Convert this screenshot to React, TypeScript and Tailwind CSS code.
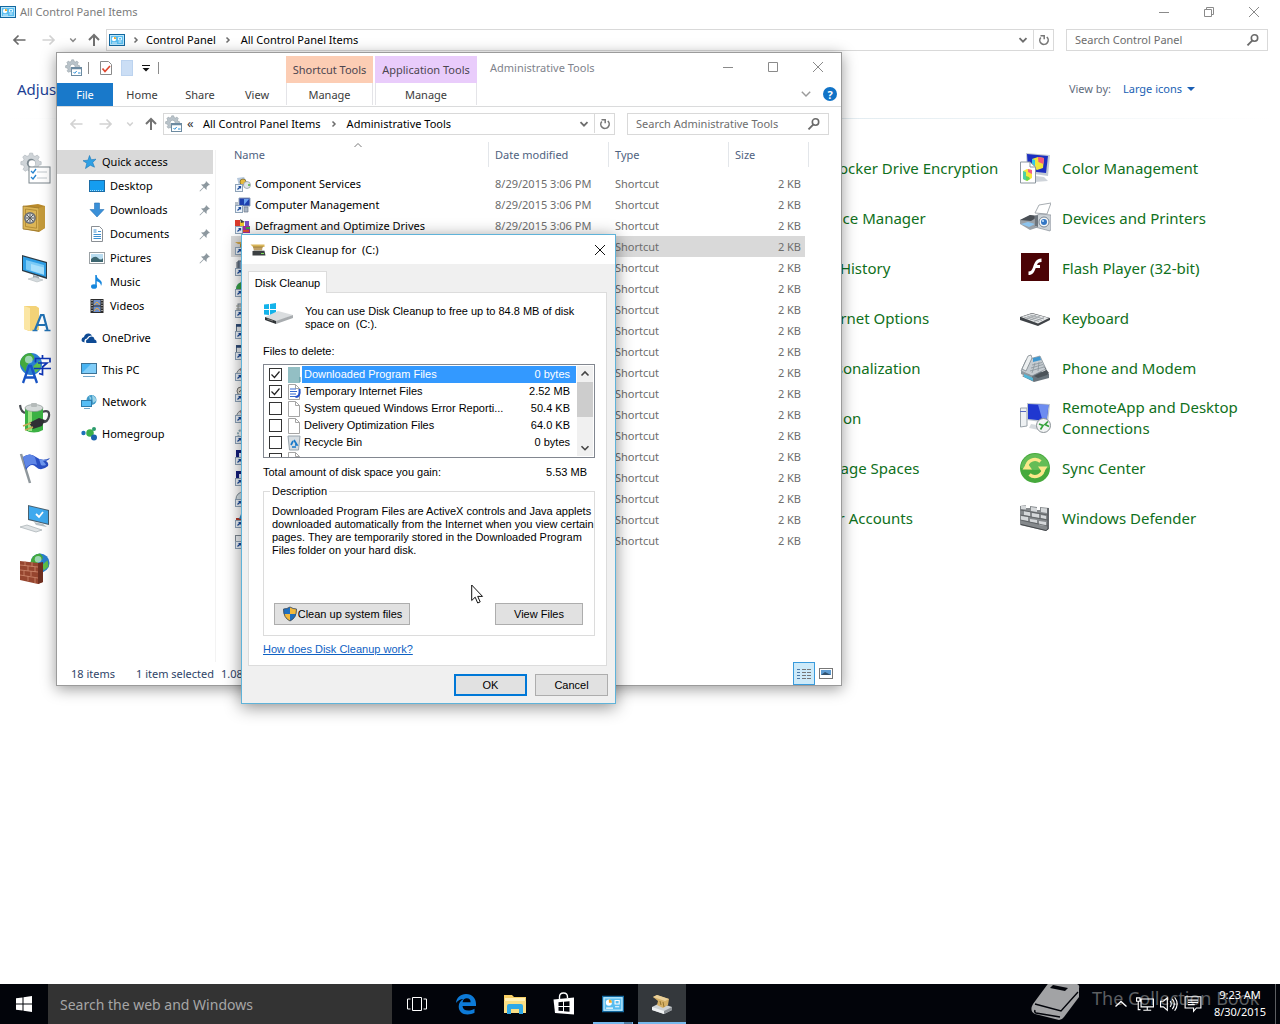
import { type ReactNode } from 'react';

/* ---------- small shared glyphs ---------- */

function Svg({ size = 16, box = 16, children }: { size?: number; box?: number; children: ReactNode }) {
  return (
    <svg width={size} height={size} viewBox={`0 0 ${box} ${box}`} fill="none" aria-hidden="true" className="block shrink-0">
      {children}
    </svg>
  );
}

const ArrowGlyph = ({ dir, color }: { dir: 'left' | 'right' | 'up'; color: string }) => (
  <Svg>
    <path
      d={
        dir === 'left'
          ? 'M14.5 8H3M7.5 3.5 3 8l4.5 4.5'
          : dir === 'right'
            ? 'M1.500 8H13M8.500 3.500 13 8l-4.500 4.500'
            : 'M8 14V3M3 8l5-5 5 5'
      }
      stroke={color}
      strokeWidth={dir === 'up' ? 2 : 1.7}
    />
  </Svg>
);
const DownGlyph = ({ color = '#6d6d6d', size = 10, width = 1.8 }: { color?: string; size?: number; width?: number }) => (
  <Svg size={size} box={10}>
    <path d="M1.500 3.200 5 6.700l3.500-3.500" stroke={color} strokeWidth={width} />
  </Svg>
);
const RightGlyph = () => (
  <Svg size={8} box={8}>
    <path d="M2.500 1.500 5 4 2.500 6.500" stroke="#6d6d6d" strokeWidth={1.5} />
  </Svg>
);
const RefreshGlyph = () => (
  <Svg size={14} box={14}>
    <path d="M3.800 4.400A4.200 4.200 0 1 0 9.800 4" stroke="#777" strokeWidth={1.6} />
    <path d="M3.500 2.700H7.200V6.200" stroke="#777" strokeWidth={1.500} />
  </Svg>
);
const SearchGlyph = () => (
  <Svg size={14} box={14}>
    <circle cx="8.500" cy="5" r="3.200" stroke="#6a6a6a" strokeWidth={1.6} />
    <path d="M6.200 7.600 1.500 12.300" stroke="#6a6a6a" strokeWidth={1.900} />
  </Svg>
);
const PanelIcon = ({ size = 16 }: { size?: number }) => (
  <Svg size={size}>
    <rect x=".500" y="2.500" width="15" height="11" fill="#58bdf0" stroke="#13679e" />
    <rect x="1.500" y="3.500" width="13" height="9" stroke="#b7e5fb" />
    <circle cx="5" cy="7" r="2.200" fill="#fff" />
    <path d="M5 7V4.800A2.200 2.200 0 0 1 7.200 7z" fill="#f0a92c" />
    <path d="M9.500 5.500h3v2.500h-3zM9.500 10h3M3 11h5" stroke="#fff" strokeWidth=".8" />
  </Svg>
);
const gear =
  'M6.700.8h2l.4 1.700 1.300.5 1.500-.9 1.400 1.400-.9 1.500.5 1.300 1.700.4v2l-1.700.4-.5 1.300.9 1.500-1.400 1.400-1.500-.9-1.300.5-.4 1.700h-2l-.4-1.700-1.300-.5-1.500.9-1.400-1.400.9-1.500-.5-1.300L.6 8.700v-2l1.700-.4L2.800 5l-.9-1.500L3.300 2.100l1.500.9 1.400-.5z';
const ToolsIcon = () => (
  <Svg size={18} box={18}>
    <path d={gear} fill="#b9c3ca" stroke="#98a2a9" strokeWidth=".6" />
    <circle cx="7.600" cy="7.700" r="2.500" fill="#fff" stroke="#98a2a9" strokeWidth=".6" />
    <rect x="6.500" y="8.500" width="10" height="8" fill="#fff" stroke="#6d8ba1" />
    <path d="M6 9.500h11" stroke="#6d8ba1" strokeWidth="1.500" />
    <path d="m8.500 13 1.200 1.300 2-2.300M13 14h2.500" stroke="#2b8ed6" />
  </Svg>
);
const DiskCleanIcon = ({ size = 16 }: { size?: number }) => (
  <Svg size={size}>
    <path d="M.500 2.500h14v2.500H3z" fill="#d9b65b" />
    <path d="M3 5h9.500L12 9H4z" fill="#c0a168" />
    <path d="M3 5h10" stroke="#8c6d25" strokeWidth=".7" />
    <path d="M2.500 9h12l1 4.500h-13z" fill="#3c4043" />
    <path d="M2.500 9h12v-.8h-10z" fill="#aeb4b8" />
    <path d="M11 11.500h3" stroke="#7fe35a" />
  </Svg>
);

/* ---------- large control panel icons ---------- */

const Globe = ({ cx, cy, r }: { cx: number; cy: number; r: number }) => (
  <g>
    <circle cx={cx} cy={cy} r={r} fill="#2a7fd0" />
    <path d={`M${cx - r} ${cy}a${r} ${r} 0 0 1 ${r} ${-r}q${r * 0.6} ${r * 0.5} 0 ${r * 0.8}t${-r * 0.4} ${r}z`} fill="#43a93c" />
    <path d={`M${cx + r * 0.2} ${cy + r * 0.2}l${r * 0.6} ${-r * 0.5} ${r * 0.1} ${r * 0.7} ${-r * 0.5} ${r * 0.4}z`} fill="#5fc04b" />
    <circle cx={cx - r * 0.2} cy={cy - r * 0.4} r={r * 0.35} fill="#d6f4ff" opacity=".6" />
  </g>
);

const big: Record<string, ReactNode> = {
  admin: (
    <>
      <g transform="translate(1 0) scale(1.450)">
        <path d={gear} fill="#cfd4d8" stroke="#b4bbc0" strokeWidth=".5" />
        <circle cx="7.700" cy="7.700" r="3" fill="#7d8990" />
        <circle cx="8.300" cy="8" r="2.300" fill="#fff" />
      </g>
      <rect x="10" y="15" width="21" height="16" fill="#fff" stroke="#7b858c" />
      <path d="m12 19 2 2 3-4M12 25l2 2 3-4" stroke="#2784cf" strokeWidth="1.300" />
      <path d="M18 20h10M18 26h10" stroke="#c0c7cc" />
    </>
  ),
  vault: (
    <>
      <path d="m4 4 15-2 7 2v22l-6 4-16-3z" fill="#b98a2b" />
      <path d="M4 4 20 6v23L4 27z" fill="#dcb556" stroke="#92702a" strokeWidth=".7" />
      <path d="m20 6 6-2v22l-6 3z" fill="#c49a3a" />
      <path d="m6.500 7 11 1.400v17.800L6.500 24.500z" stroke="#a9832f" strokeWidth=".8" />
      <circle cx="11" cy="16" r="6" fill="#6f7275" />
      <circle cx="11" cy="16" r="4.300" fill="#d9dcdd" />
      <path d="M11 12v8M7 16h8M8 13l6 6M14 13l-6 6" stroke="#55585b" />
    </>
  ),
  display: (
    <>
      <path d="m3 3 25 7v17L3 19z" fill="#2d3b45" />
      <path d="m4 4.500 23 6.500v14L4 18z" fill="#2f9fe6" />
      <path d="m7 8 18 5v10L7 17.500z" fill="#7bcbf7" />
      <path d="m12 12 13 3.500v7L12 18.500z" fill="#a8e0fc" />
      <path d="m14 23 6 1.500V28l-6-1z" fill="#9ea8af" />
      <path d="m9 27 7-2 8 3-6 2z" fill="#d4dadd" stroke="#aab2b7" strokeWidth=".5" />
    </>
  ),
  fonts: (
    <>
      <path d="M5 4h12l3 2v22l-10 1-5-2z" fill="#f3d277" />
      <path d="m5 4 6 2v23l-6-2z" fill="#fbe6a4" />
      <path d="m16 28 6-15h2.500l4 15M18 23h8" stroke="#2272b4" strokeWidth="2.200" />
      <path d="M13.500 28.500h5M25.500 28.500h6" stroke="#2272b4" strokeWidth="1.500" />
    </>
  ),
  language: (
    <>
      <Globe cx={12} cy={12} r={11} />
      <path d="m4 31 6-17h2l6 17M6.500 25.500h9" stroke="#1753c4" strokeWidth="2.300" />
      <path d="M23.500 3v3M16.500 10.500V6.500h14.500v4M19 11h9l-4.500 4v7.500l-3.500-1M15 16.500h17" stroke="#0f35b5" strokeWidth="1.700" />
    </>
  ),
  power: (
    <>
      <path d="M1 3q1 8 6 8M23 10q8-3 7 4t-9 6" stroke="#484b50" strokeWidth="2.200" />
      <path d="M6 6v22q9 5 18 0V6z" fill="#3bb143" />
      <path d="M9 8v21h4V8z" fill="#98e37f" />
      <ellipse cx="15" cy="6" rx="9" ry="3.500" fill="#d5dad9" stroke="#8d9695" strokeWidth=".7" />
      <rect x="12" y="1" width="6" height="4" rx="1" fill="#b5bbba" />
      <path d="m10 21 10-5 6 2-3 6-9 3z" fill="#2f3034" />
      <path d="m4 24 8-3M6 28l8-3" stroke="#c7a754" strokeWidth="1.500" />
    </>
  ),
  flag: (
    <>
      <path d="m2 2 9 29" stroke="#8f979c" strokeWidth="2.500" />
      <path d="M4 5q7-5 13 0t14 1q-1 2-4 3 3 2 2 5-7 6-12 1t-10 3z" fill="#2a50c4" />
      <path d="M4 5q7-5 12 0l2 8q-6-3-11 3z" fill="#5f86e6" />
      <path d="M20 7q5 2 9 0-2 2-5 2 3 3 3 4-3 1-5 0z" fill="#6e97ee" />
    </>
  ),
  system: (
    <>
      <path d="m9 3 21 5v15L9 18z" fill="#49606f" />
      <path d="m10 4.200 19 4.500v13L10 17z" fill="#3fa9ee" />
      <path d="m17 12 3 3 4-5" stroke="#fff" strokeWidth="1.800" />
      <path d="m15 20 9 2 4 3-11-2z" fill="#b6bfc4" />
      <path d="m1 25 7-2 15 5-6 2z" fill="#dfe3e5" stroke="#a5adb1" strokeWidth=".7" />
    </>
  ),
  firewall: (
    <>
      <Globe cx={21} cy={11} r={9.500} />
      <path d="m1 9 18 2 5 0v19l-5 2-18-4z" fill="#96452f" />
      <path d="m19 11 5-1v20l-5 2z" fill="#6f2f20" />
      <path d="M1 13l18 2M1 18l18 2M1 23l18 3M6 9v5M13 10v5M9 14v5M16 15v5M5 19v5M12 19v5M9 24v5M16 26v5" stroke="#cf8a70" strokeWidth=".8" />
    </>
  ),
  color: (
    <>
      <path d="m7 1 24 2-2 21-21-3z" fill="#c3cad3" />
      <path d="m8 2 21 2-2 17L9 19z" fill="#1d2fc0" />
      <path d="m13 7 6-2 6 1-1 10-6 2-5-3z" fill="#f2e53a" />
      <path d="m13 7 3 1v8l-3-1z" fill="#35c9e8" />
      <path d="m19 5 6 1-.6 6-5-2z" fill="#f5587c" />
      <path d="m17 24 8 1 4 4-13 1z" fill="#cfd4da" />
      <path d="M1.500 10H11l5.500 5v16h-15z" fill="#fff" stroke="#8d979f" />
      <path d="M11 10v5h5.500" stroke="#8d979f" />
      <path d="m4 19 4-2 5 1v8l-5 3-4-2z" fill="#f7e63c" />
      <path d="m4 19 3 1v8.500L4 27z" fill="#4ed0a5" />
      <path d="m9 17 4 1v4l-4-2z" fill="#f25e8a" />
      <path d="m7 24 3 1 1 2-3 2-1-1z" fill="#5fd84e" />
    </>
  ),
  printers: (
    <>
      <path d="M16 11 20 3l12-2-4 11z" fill="#fff" stroke="#a6acb1" />
      <path d="m1 18 10-5 9 2v10l-9 3-10-6z" fill="#9aa1a8" />
      <path d="m1 18 10-5 9 1-8 5z" fill="#4a4f55" />
      <path d="m2 22 8 3 6-3-7-2z" fill="#8cc4ee" />
      <path d="m16 14 5-2 11 1v14l-1 2-15-4z" fill="#ccd2d7" stroke="#89919a" strokeWidth=".7" />
      <path d="m16 14 3-1v12l-3-1z" fill="#6d757d" />
      <circle cx="25" cy="20" r="5" fill="#f5f7f9" stroke="#7a8692" />
      <circle cx="25" cy="20" r="3" fill="#3376c4" />
      <circle cx="24" cy="19" r="1" fill="#c8e4ff" />
    </>
  ),
  flash: (
    <>
      <rect x="2" y="1" width="28" height="28" fill="#4b0305" />
      <path
        d="M22.500 6.500v3.600c-2.500 0-3.600.9-4.500 2.900h3v3h-4.300C15.100 20.500 13.500 23 9.500 23v-3.500c2.500 0 3.500-1.500 4.600-4.500 1.600-4.500 3.300-8.500 8.400-8.500z"
        fill="#fff"
      />
    </>
  ),
  keyboard: (
    <>
      <path d="m1 15 12-4 18 5v2L19 24 1 18z" fill="#3f4347" />
      <path d="m2 15 11-3.500L30 16l-11 5.500z" fill="#e6e8e9" />
      <path d="m5 15 15 4.500M8 14l15 4.500M11 13l14 4M7 17l10-4M11 18l10-4M15 19.500l10-4" stroke="#8f9599" strokeWidth=".7" />
    </>
  ),
  phone: (
    <>
      <path d="m3 24 12 6 15-4v-4l-12-4z" fill="#69747c" />
      <path d="m2 19 5-11 14-4 6 13-14 7z" fill="#c6ccd1" stroke="#7b858c" strokeWidth=".7" />
      <path d="m2 19 11 5v3L2 22z" fill="#8e989f" />
      <path d="m3 17 6-13 3-1 1 3-6 13z" fill="#eceff0" stroke="#727b82" strokeWidth=".7" />
      <path d="m14 6 7-1.500 1 3.500-8 2z" fill="#3f97cf" />
      <path d="m13 13 10-2.500M12 16l12-3.500M11 19l14-4M16 11l-3 10M20 10l-1 9" stroke="#8a949b" strokeWidth=".8" />
      <path d="m5 22 9 4v3l-9-4z" fill="#52b7d9" />
      <path d="m24 13 6 8-2 2-9 3-4-2 12-6z" fill="#4c545a" />
    </>
  ),
  remote: (
    <>
      <path d="M1.500 6H8v18l-6.500 1z" fill="#eef1f3" stroke="#9aa3aa" />
      <path d="M1 9.500h6" stroke="#5669c0" />
      <path d="m8 1 23 1-2 19-21-3z" fill="#bcc5ce" />
      <path d="m9 2 20.500 1-2 16L9 17z" fill="#2038d0" />
      <path d="m19 2.500 10.500.5-2 16-4-.5z" fill="#6d8cf0" />
      <path d="m12 22 6 1 2 5-10-2z" fill="#d5dade" />
      <circle cx="24.500" cy="23.500" r="7" fill="#f2f4f4" stroke="#8b9297" />
      <path d="m20 22 4 1.500-2.500 4M29 19.500l-3 3 4 2" stroke="#34a23b" strokeWidth="1.700" />
    </>
  ),
  sync: (
    <>
      <circle cx="16" cy="16" r="15" fill="#46a93c" />
      <path d="M2 16a14 14 0 0 1 28 0q-14 4-28 0z" fill="#64bd56" />
      <path d="M7.500 16A8.500 8.500 0 0 1 21.500 9.500M24.500 16A8.500 8.500 0 0 1 10.500 22.500" stroke="#fbe88a" strokeWidth="3.400" />
      <path d="m3.500 17.500 4.500-7 5 7zM19 14.500h9.500l-4.500 7z" fill="#fbe88a" />
    </>
  ),
  defender: (
    <>
      <path d="m1 4 6-1v3h4V4l7 1v3h3V5l9 1v21l-3 2-26-6z" fill="#85898c" />
      <path d="m2 4 5-.5v4L2 7zM12 5l6 1v4l-6-1zM22 6l6 .5V11l-6-1zM5 9l6 1v4l-6-1zM13 11l7 1v4l-7-1zM22 13l5 1v3l-5-1zM2 14l7 1v4l-7-1zM11 17l7 1v3l-7-1zM20 19l7 1v4l-7-1z" fill="#d5d8da" />
      <path d="M1.500 8l27 5M1.500 13l27 5M1.500 18l27 6" stroke="#55595c" strokeWidth=".8" />
      <path d="M29 6v21l-2 1.500-25-6" stroke="#43474a" />
    </>
  ),
};

type Item = { label: string; icon?: string; col: 'first' | 'fourth' | 'fifth' };
const items: Item[] = [
  { label: 'Administrative Tools', icon: 'admin', col: 'first' },
  { label: 'BitLocker Drive Encryption', col: 'fourth' },
  { label: 'Color Management', icon: 'color', col: 'fifth' },
  { label: 'Credential Manager', icon: 'vault', col: 'first' },
  { label: 'Device Manager', col: 'fourth' },
  { label: 'Devices and Printers', icon: 'printers', col: 'fifth' },
  { label: 'Display', icon: 'display', col: 'first' },
  { label: 'File History', col: 'fourth' },
  { label: 'Flash Player (32-bit)', icon: 'flash', col: 'fifth' },
  { label: 'Fonts', icon: 'fonts', col: 'first' },
  { label: 'Internet Options', col: 'fourth' },
  { label: 'Keyboard', icon: 'keyboard', col: 'fifth' },
  { label: 'Language', icon: 'language', col: 'first' },
  { label: 'Personalization', col: 'fourth' },
  { label: 'Phone and Modem', icon: 'phone', col: 'fifth' },
  { label: 'Power Options', icon: 'power', col: 'first' },
  { label: 'Region', col: 'fourth' },
  { label: 'RemoteApp and Desktop Connections', icon: 'remote', col: 'fifth' },
  { label: 'Security and Maintenance', icon: 'flag', col: 'first' },
  { label: 'Storage Spaces', col: 'fourth' },
  { label: 'Sync Center', icon: 'sync', col: 'fifth' },
  { label: 'System', icon: 'system', col: 'first' },
  { label: 'User Accounts', col: 'fourth' },
  { label: 'Windows Defender', icon: 'defender', col: 'fifth' },
  { label: 'Windows Firewall', icon: 'firewall', col: 'first' },
];
const colClass = { first: 'col-start-1', fourth: 'col-start-4', fifth: 'col-start-5' };

function CaptionButtons({ restore }: { restore?: boolean }) {
  return (
    <div className="flex">
      <button aria-label="Minimize" className="flex h-7 w-[45px] items-center justify-center">
        <Svg size={12} box={12}><path d="M1 6.500h10" stroke="#8a8a8a" /></Svg>
      </button>
      <button aria-label={restore ? 'Restore' : 'Maximize'} className="flex h-7 w-[45px] items-center justify-center">
        <Svg size={12} box={12}>
          {restore ? (
            <path d="M1.500 3.500h7v7h-7zM3.500 3.500v-2h7v7h-2" stroke="#8a8a8a" />
          ) : (
            <path d="M1.500 1.500h9v9h-9z" stroke="#8a8a8a" />
          )}
        </Svg>
      </button>
      <button aria-label="Close" className="flex h-7 w-[46px] items-center justify-center">
        <Svg size={12} box={12}><path d="m1 1 10 10M11 1 1 11" stroke="#8a8a8a" /></Svg>
      </button>
    </div>
  );
}

function NavButtons({ dim }: { dim?: boolean }) {
  return (
    <div className="flex items-center">
      <button aria-label="Back" className="flex w-[30px] justify-center"><ArrowGlyph dir="left" color={dim ? '#d2d2d2' : '#6b6b6b'} /></button>
      <button aria-label="Forward" className="flex w-[30px] justify-center"><ArrowGlyph dir="right" color="#d2d2d2" /></button>
      <button aria-label="Recent locations" className="flex w-[17px] justify-center"><DownGlyph color={dim ? '#d2d2d2' : '#8a8a8a'} size={8} /></button>
      <button aria-label="Up" className="flex w-[25px] justify-center"><ArrowGlyph dir="up" color="#727272" /></button>
    </div>
  );
}

function SearchBox({ label, width }: { label: string; width: string }) {
  return (
    <div className={`flex h-[22px] items-center border border-[#d9d9d9] bg-white pl-2 pr-[7px] ${width}`}>
      <input type="search" aria-label={label} placeholder={label} className="min-w-0 flex-1 bg-transparent outline-none placeholder:text-[#6d6d6d]" />
      <SearchGlyph />
    </div>
  );
}

function ControlPanel() {
  return (
    <main className="flex grow flex-col bg-white">
      <header className="flex h-[23px] items-center pr-[3px]">
        <PanelIcon />
        <h1 className="grow pl-1 text-[#7b7b7b]">All Control Panel Items</h1>
        <div className="-my-2"><CaptionButtons restore /></div>
      </header>
      <div className="mt-[6px] flex items-center pl-1 pr-3">
        <NavButtons />
        <nav aria-label="Address" className="flex h-[22px] grow items-center border border-[#d9d9d9] pb-px pl-[2px]">
          <PanelIcon />
          <span className="flex w-[21px] justify-center"><RightGlyph /></span>
          <a href="#control-panel" className="text-black">Control Panel</a>
          <span className="flex w-[25px] justify-center"><RightGlyph /></span>
          <a href="#all-items" className="grow text-black">All Control Panel Items</a>
          <button aria-label="Previous locations" className="flex w-5 justify-center"><DownGlyph /></button>
          <button aria-label="Refresh" className="flex h-full w-5 items-center justify-center border-l border-[#d9d9d9]"><RefreshGlyph /></button>
        </nav>
        <SearchBox label="Search Control Panel" width="ml-3 w-[202px]" />
      </div>
      <div className="flex h-[67px] items-center pl-[17px] pr-[85px] pt-[9px]">
        <h2 className="grow text-[15px] leading-[21px] text-[#1c3f94]">Adjust your computer&apos;s settings</h2>
        <span className="mr-3 text-[#5f6b7d]">View by:</span>
        <button className="flex items-center gap-[5px] text-[#1a5fb4]">
          Large icons
          <Svg size={8} box={8}><path d="M0 2h8L4 6z" fill="#1a5fb4" /></Svg>
        </button>
      </div>
      <div className="mx-2 h-px bg-linear-to-r from-white via-[#d5e3ea] to-white" />
      <ul className="grid auto-rows-[50px] grid-cols-[repeat(5,250px)] overflow-hidden pl-[19px] pt-6">
        {items.map((it) => (
          <li key={it.label} className={`${colClass[it.col]} flex items-center`}>
            <a href="#item" aria-label={it.label} className="flex items-center text-[15px] leading-[21px] text-[#0f7020]">
              <span className="mr-[11px] block size-8 shrink-0">{it.icon && <Svg size={32} box={32}>{big[it.icon]}</Svg>}</span>
              {it.col !== 'first' && <span className={it.col === 'fifth' ? 'w-48' : 'whitespace-nowrap'}>{it.label}</span>}
            </a>
          </li>
        ))}
      </ul>
    </main>
  );
}

/* ---------- Administrative Tools window ---------- */

const Pin = () => (
  <Svg size={12} box={12}>
    <path d="m7 1 4 4-1.500.3-1.800 1.800L7.500 10 5 7.500 1 11.500l-.5-.5 4-4L2 4.500l2.900-.2L6.700 2.500z" fill="#8d989f" />
  </Svg>
);

const navIcons: Record<string, ReactNode> = {
  'Quick access': <path d="m8.500 1.500 1.700 4.200 4.800-.5-3.300 3.200 1.800 4.800-4.200-2L4.500 14.500l1.300-5.300L2 6.700l5-.5z" fill="#2fa0e4" stroke="#1a77b8" strokeWidth=".6" />,
  Desktop: <><rect x=".500" y="2.500" width="15" height="11" fill="#159df0" stroke="#1c6ca5" /><path d="M1 12.500h14" stroke="#a6dcf9" strokeDasharray="1 1" /></>,
  Downloads: <path d="M5.500 1h5v6.500H15L8 15 1 7.500h4.500z" fill="#3a90d8" stroke="#2a74b5" strokeWidth=".6" />,
  Documents: <><path d="M2.500.5h8l3 3v12h-11z" fill="#fff" stroke="#8a8f94" /><path d="M4.500 4h3M4.500 6h3M9 5.500h3M4.500 8.500H12M4.500 10.500H12M4.500 12.500H12" stroke="#3d8fd0" /></>,
  Pictures: <><rect x=".500" y="2.500" width="15" height="11" fill="#fff" stroke="#9ba1a5" /><path d="M2 4h12v8H2z" fill="#b9dcf0" /><path d="M2 9q4-4 7-1t5 0v4H2z" fill="#3d6670" /></>,
  Music: <><path d="M7 1v11" stroke="#1787dd" strokeWidth="1.500" /><path d="M7 1q1 3 4 5t1 6q0-4-5-5z" fill="#1787dd" /><ellipse cx="5" cy="12.500" rx="3" ry="2.300" fill="#1787dd" /></>,
  Videos: <><rect x="1.500" y="1" width="13" height="14" fill="#2d2d2d" /><path d="M4.500 2h7v5.500h-7zM4.500 8.500h7V14h-7z" fill="#6f8fc9" /><path d="m5 7 3-3 3 3M5 13l3-3 3 3" stroke="#e0a742" /><path d="M3 2v12M13 2v12" stroke="#fff" strokeDasharray="1 1.500" /></>,
  OneDrive: <><path d="M1 11.500Q-.5 8 3 7q1-4 5-3.500 2 .3 3 2-4 0-5 3-3 0-2.500 4z" fill="#0e4a94" /><path d="M5.500 13q-1.500-3 1.500-4 1-3 4-2.500 2.500.5 2.500 3 2.500.5 2 3.500z" fill="#0e4a94" /></>,
  'This PC': <><rect x=".500" y="1.500" width="15" height="10" fill="#49b4f2" stroke="#3d7397" /><path d="m1 11 9-9h5v9z" fill="#81cdf8" /><path d="M2 14.500h12" stroke="#71a5c8" /></>,
  Network: <><circle cx="10.500" cy="6" r="5" fill="#3f9ac9" /><path d="M8 2q4 2 1 4M11 1q5 3 4 6l-3 2z" fill="#9bd2e7" /><rect x=".500" y="6.500" width="10" height="6" fill="#56bdf5" stroke="#2f7aa9" /><path d="M3 14.500h6" stroke="#71a5c8" /></>,
  Homegroup: <><circle cx="2.500" cy="7" r="2.200" fill="#1c71b9" /><circle cx="9" cy="7" r="3.800" fill="#3aaf49" /><circle cx="13" cy="3" r="2" fill="#2a9b6c" /><circle cx="13" cy="11.500" r="3" fill="#1c63ad" /></>,
};
const quick = ['Desktop', 'Downloads', 'Documents', 'Pictures', 'Music', 'Videos'];
const roots = ['OneDrive', 'This PC', 'Network', 'Homegroup'];

const Shortcut = ({ art }: { art: ReactNode }) => (
  <Svg>
    {art}
    <rect x=".500" y="8.500" width="7" height="7" fill="#eef4fb" stroke="#8ea3b8" />
    <path d="M2.500 13.500 5.500 10.500M3.500 10.500h2v2" stroke="#1b4b9b" strokeWidth="1.200" />
  </Svg>
);
const gaugeArt = <><path d="M1 12A7 9 0 0 1 15 12z" fill="#e3e6e8" stroke="#80878c" /><path d="m8 9-3-5" stroke="#a66" /></>;
const boxArt = <><rect x="1.500" y="1.500" width="13" height="12" fill="#e7ebef" stroke="#5a6d80" /><path d="M1 2.500h14" stroke="#2c4a78" strokeWidth="2.500" /></>;
const navyArt = <><rect x="1" y="1" width="14" height="13" fill="#16207e" /><path d="M4 4h9v8H4z" fill="#eef" /></>;
const rows: { name: string; art: ReactNode; shown?: boolean; selected?: boolean }[] = [
  { name: 'Component Services', shown: true, art: <><path d="M2 2 9 1l3 5-8 4z" fill="#b7c9dd" /><circle cx="8" cy="6" r="3" fill="#e7b93c" stroke="#77621f" strokeWidth=".7" /><circle cx="12" cy="9" r="3.500" fill="#dfe5ea" stroke="#8a949c" strokeWidth=".7" /><circle cx="14" cy="9" r="1" fill="#4fae3a" /></> },
  { name: 'Computer Management', shown: true, art: <><path d="M4 1h11v8H4z" fill="#1e3fae" stroke="#8fa0b5" /><path d="M9 2h5L9 8z" fill="#6ba2f0" /><path d="M9 10h4v5H9z" fill="#aab5c4" stroke="#6d7a8b" strokeWidth=".7" /><path d="M0 5h3v3H0z" fill="#b4bdc7" /></> },
  { name: 'Defragment and Optimize Drives', shown: true, art: <><path d="M0 2h5v6H0z" fill="#d93a2b" /><path d="M5 4h4v4H5z" fill="#f0c62c" /><path d="m5 1 5 3-4 1z" fill="#444" /><path d="M10 3h4v5h-4z" fill="#7b51c4" /><path d="M7 8h8v7H7z" fill="#a12f9b" /><path d="M11 9h4v2h-4z" fill="#39a845" /><path d="M8 12h6v2H8z" fill="#e2512f" /></> },
  { name: 'Disk Cleanup', selected: true, art: <><path d="M0 3h14v2H3z" fill="#d0a64c" /><path d="M5 5h8v3H5z" fill="#b88d35" /></> },
  { name: 'Event Viewer', art: <><path d="M3 1h11v13H3z" fill="#8fa9c9" stroke="#4e5b6a" /><path d="M1 3h4M1 5h4M1 7h4" stroke="#4e5b6a" /></> },
  { name: 'iSCSI Initiator', art: <><circle cx="8" cy="8" r="7" fill="#2e83c7" /><path d="M1 8a7 7 0 0 1 7-7q2 4-1 6t-3 4z" fill="#3da547" /></> },
  { name: 'Local Security Policy', art: <><rect x="3" y="2" width="10" height="11" fill="#dfe5ea" stroke="#7c8791" /><path d="M1 4h7M1 7h7" stroke="#9b9b90" /></> },
  { name: 'ODBC Data Sources (32-bit)', art: boxArt },
  { name: 'ODBC Data Sources (64-bit)', art: boxArt },
  { name: 'Performance Monitor', art: gaugeArt },
  { name: 'Print Management', art: <><circle cx="6" cy="5" r="4" fill="#e8e4da" stroke="#777" /><path d="m4 6 5-4" stroke="#555" /></> },
  { name: 'Resource Monitor', art: gaugeArt },
  { name: 'Services', art: <><circle cx="7" cy="6" r="4" stroke="#8fb0bd" strokeWidth="2" strokeDasharray="2 1" /></> },
  { name: 'System Configuration', art: navyArt },
  { name: 'System Information', art: navyArt },
  { name: 'Task Scheduler', art: <><circle cx="8" cy="8" r="7" fill="#d7e3e9" stroke="#7f8d96" /></> },
  { name: 'Windows Firewall with Advanced Security', art: <><path d="M1 6h13v8H1z" fill="#b23a2c" /><path d="M6 2h8v5H4z" fill="#3c8bc8" /></> },
  { name: 'Windows Memory Diagnostic', art: <><rect x=".500" y="2.500" width="14" height="12" fill="#edf1f5" stroke="#7c8791" /></> },
];

function ContextTab({ title, tone, width }: { title: string; tone: string; width: string }) {
  return (
    <div className={`flex shrink-0 flex-col items-center ${width}`}>
      <span className={`flex h-[27px] w-full items-center justify-center pt-px text-[#4c4650] ${tone}`}>{title}</span>
      <button className="h-[22px] w-full border-x border-[#e4e4e8] pt-px text-[#3b3b3b]">Manage</button>
    </div>
  );
}

function NavEntry({ name, child }: { name: string; child?: boolean }) {
  return (
    <li>
      <a
        href="#place"
        className={`flex h-6 items-center text-black ${child ? 'pl-8' : name === 'Quick access' ? 'bg-[#d9d9d9] pl-6' : 'pl-6'}`}
      >
        <span className="mr-[5px]"><Svg>{navIcons[name]}</Svg></span>
        <span className="grow">{name}</span>
        {child && quick.indexOf(name) < 4 && <span className="mr-[2px]"><Pin /></span>}
      </a>
    </li>
  );
}

function AdminTools() {
  return (
    <section aria-label="Administrative Tools" className="absolute left-14 top-[52px] flex h-[634px] w-[786px] flex-col border border-[#9b9b9b] bg-white shadow-[0_3px_14px_rgba(0,0,0,0.4)]">
      <div className="flex h-[54px] shrink-0 border-b border-[#dadbdc]">
        <div className="flex w-[229px] shrink-0 flex-col">
          <div className="flex h-[30px] items-center pl-2">
            <ToolsIcon />
            <span className="ml-[5px] h-3 w-px bg-[#8b8b8b]" />
            <button aria-label="Properties" className="ml-[9px]">
              <Svg><path d="M2.500 1.500h8l3 3v10h-11z" fill="#fff" stroke="#8a8a8a" /><path d="m4.500 8.500 2.500 3 5-5.500" stroke="#e0472f" strokeWidth="1.700" /></Svg>
            </button>
            <button aria-label="New folder" className="ml-[7px] h-4 w-3 border border-[#bcd3ef] bg-[#cbdef5]" />
            <button aria-label="Customize" className="ml-[9px]">
              <Svg size={8} box={8}><path d="M0 1.500h8" stroke="#111" /><path d="M.5 4h7L4 7.500z" fill="#111" /></Svg>
            </button>
            <span className="ml-2 h-3 w-px bg-[#8b8b8b]" />
          </div>
          <div className="flex h-[23px] text-[#3b3b3b]">
            <button className="w-14 bg-[#1979ca] pt-px text-white">File</button>
            <button className="w-[58px] pt-px">Home</button>
            <button className="w-[58px] pt-px">Share</button>
            <button className="w-[56px] pt-px">View</button>
          </div>
        </div>
        <div className="flex gap-[2px] pt-[3px]">
          <ContextTab title="Shortcut Tools" tone="bg-[#fccdb4]" width="w-[87px]" />
          <ContextTab title="Application Tools" tone="bg-[#e9ccfb]" width="w-[102px]" />
        </div>
        <h2 className="ml-[13px] mt-[7px] grow text-[#80838c]">Administrative Tools</h2>
        <div className="flex flex-col items-end">
          <CaptionButtons />
          <div className="flex grow items-center gap-[11px] pr-1 pt-px">
            <button aria-label="Minimize the ribbon"><DownGlyph color="#9a9a9a" size={12} width={1.2} /></button>
            <button aria-label="Help" className="flex size-[14px] items-center justify-center rounded-full bg-[#1173c7] font-bold leading-none text-white">?</button>
          </div>
        </div>
      </div>
      <div className="mt-[6px] flex shrink-0 items-center pl-1 pr-3">
        <NavButtons dim />
        <nav aria-label="Address" className="flex h-[22px] grow items-center border border-[#d9d9d9] pb-px pl-px">
          <ToolsIcon />
          <span className="w-5 pl-1 text-[13px] leading-none text-[#333]">«</span>
          <a href="#all-items" className="text-black">All Control Panel Items</a>
          <span className="flex w-[26px] justify-center"><RightGlyph /></span>
          <a href="#tools" className="grow text-black">Administrative Tools</a>
          <button aria-label="Previous locations" className="flex w-5 justify-center"><DownGlyph /></button>
          <button aria-label="Refresh" className="flex h-full w-5 items-center justify-center border-l border-[#d9d9d9]"><RefreshGlyph /></button>
        </nav>
        <SearchBox label="Search Administrative Tools" width="ml-3 w-[202px]" />
      </div>
      <div className="flex min-h-0 grow">
        <ul className="mt-[15px] w-[159px] shrink-0 border-r border-[#f3f3f3] pr-[2px]">
          <NavEntry name="Quick access" />
          {quick.map((n) => <NavEntry key={n} name={n} child />)}
          <li aria-hidden="true" className="h-2" />
          {roots.map((n) => (
            <li key={n} className="mb-2 list-none"><ul><NavEntry name={n} /></ul></li>
          ))}
        </ul>
        <div className="pl-[15px] pt-[7px]">
          <table className="w-[578px] table-fixed border-separate border-spacing-0 text-left">
            <colgroup>
              <col className="w-[258px]" />
              <col className="w-[120px]" />
              <col className="w-[120px]" />
              <col className="w-[80px]" />
            </colgroup>
            <thead>
              <tr className="h-[25px] text-[#4f6280]">
                <th scope="col" className="relative border-r border-[#e3e6ea] pl-[3px] font-normal">
                  Name
                  <span className="absolute left-[122px] -top-px"><Svg size={10} box={10}><path d="M1.500 6 5 2.500 8.500 6" stroke="#7a7a7a" /></Svg></span>
                </th>
                <th scope="col" className="border-r border-[#e3e6ea] pl-[6px] font-normal">Date modified</th>
                <th scope="col" className="border-r border-[#e3e6ea] pl-[6px] font-normal">Type</th>
                <th scope="col" className="border-r border-[#e3e6ea] pl-[6px] font-normal">Size</th>
              </tr>
            </thead>
            <tbody className="before:block before:h-[6px]">
              {rows.map((r) => (
                <tr key={r.name} aria-selected={!!r.selected} className="text-[#6d6d6d]">
                  <td className="p-0">
                    <div aria-label={r.name} className={`flex h-[21px] items-center gap-1 pl-1 text-black ${r.selected ? 'bg-[#d9d9d9]' : ''}`}>
                      <Shortcut art={r.art} />
                      {r.shown && r.name}
                    </div>
                  </td>
                  <td className="p-0"><div className={`h-[21px] pl-[6px] leading-[21px] ${r.selected ? 'bg-[#d9d9d9]' : ''}`}>{r.shown && '8/29/2015 3:06 PM'}</div></td>
                  <td className="p-0"><div className={`h-[21px] pl-[6px] leading-[21px] ${r.selected ? 'bg-[#d9d9d9]' : ''}`}>Shortcut</div></td>
                  <td className="p-0"><div className={`mr-1 h-[21px] pr-1 text-right leading-[21px] ${r.selected ? 'bg-[#d9d9d9]' : ''}`}>2 KB</div></td>
                </tr>
              ))}
            </tbody>
          </table>
        </div>
      </div>
      <footer className="flex h-[23px] shrink-0 items-center pl-[14px] text-[#2f4468]">
        <span className="w-[65px]">18 items</span>
        <span className="w-[85px]">1 item selected</span>
        <span className="grow">1.08 KB</span>
        <button aria-label="Details view" className="flex h-[23px] w-[22px] items-center justify-center border border-[#3a9bdc] bg-[#cdeaf9]">
          <Svg><path d="M1 3.500h3M1 6.500h3M1 9.500h3M1 12.500h3" stroke="#4a78a8" /><path d="M6 3.500h4M11 3.500h4M6 6.500h4M11 6.500h4M6 9.500h4M11 9.500h4M6 12.500h4M11 12.500h4" stroke="#777" /></Svg>
        </button>
        <button aria-label="Large thumbnails" className="flex w-[22px] items-center justify-center">
          <Svg><rect x="1.500" y="2.500" width="13" height="10" fill="#fff" stroke="#777" /><path d="M3 4h10v5H3z" fill="#5e9bd1" /><path d="m3 9 4-3 6 3z" fill="#32516d" /></Svg>
        </button>
        <span className="w-1" />
      </footer>
    </section>
  );
}

/* ---------- Disk Cleanup dialog ---------- */

const page = <><path d="M2.500.5h7l4 4v11h-11z" fill="#fff" stroke="#a5a5a5" /><path d="M9.500.5v4h4" stroke="#a5a5a5" /></>;
const cleanup: { name: string; size: string; icon: ReactNode; checked?: boolean }[] = [
  { name: 'Downloaded Program Files', size: '0 bytes', checked: true, icon: <><path d="M2 0h12v16H2z" fill="#93bfc4" /><path d="M14 10v5" stroke="#4f8f9a" /></> },
  { name: 'Temporary Internet Files', size: '2.52 MB', checked: true, icon: <>{page}<path d="M4 5h6M4 7.500h7M4 10h6M4 12.500h7" stroke="#3569cf" /><path d="M13.500 5q1 8-4 8" stroke="#2450c8" strokeWidth="2" /></> },
  { name: 'System queued Windows Error Reporti...', size: '50.4 KB', icon: page },
  { name: 'Delivery Optimization Files', size: '64.0 KB', icon: page },
  { name: 'Recycle Bin', size: '0 bytes', icon: <><path d="M2 1h12l-1.500 14h-9z" fill="#d6dde2" stroke="#98a4ac" /><path d="m8 5 3 5H9M5 10l2-4M6 12h4" stroke="#1879c9" strokeWidth="1.700" /></> },
];

function TickBox({ label, checked }: { label: string; checked?: boolean }) {
  return (
    <label className="relative block size-[13px]">
      <input type="checkbox" aria-label={label} defaultChecked={checked} className="peer block size-[13px] appearance-none border border-[#333] bg-white" />
      <svg viewBox="0 0 13 13" width="13" height="13" fill="none" aria-hidden="true" className="pointer-events-none absolute inset-0 hidden peer-checked:block">
        <path d="m2.500 6.500 3 3 5-6" stroke="#222" strokeWidth="1.200" />
      </svg>
    </label>
  );
}

function DiskCleanup() {
  return (
    <section role="dialog" aria-label="Disk Cleanup" className="absolute left-[241px] top-[234px] flex h-[470px] w-[375px] flex-col border border-[#5fb3d9] bg-[#f0f0f0] font-['Liberation_Sans',sans-serif] text-black shadow-[0_3px_16px_rgba(0,0,0,0.45)]">
      <header className="flex h-[29px] shrink-0 items-center bg-white pl-2 font-['Noto_Sans',sans-serif]">
        <DiskCleanIcon />
        <h2 className="grow whitespace-pre pl-[5px]">{'Disk Cleanup for  (C:)'}</h2>
        <button aria-label="Close" className="mr-[9px]"><Svg size={12} box={12}><path d="m1 1 10 10M11 1 1 11" stroke="#111" /></Svg></button>
      </header>
      <div className="mt-[7px] flex shrink-0 pl-[6px]">
        <button role="tab" aria-selected="true" className="relative z-10 -mb-px h-[22px] w-[79px] border border-b-0 border-[#dcdcdc] bg-white">Disk Cleanup</button>
      </div>
      <div role="tabpanel" className="ml-[6px] mr-[8px] flex h-[374px] flex-col border border-[#dcdcdc] bg-white pl-[14px] pr-[11px]">
        <div className="flex h-[51px] items-start gap-[10px] pt-[7px] leading-[13px]">
          <Svg size={32} box={32}>
            <path d="m1 4.500 5-.5v5H1zM7 3.900 13 3v6H7zM1 10h5v5l-5-.5zM7 10h6v6l-6-.8z" fill="#14b3ea" />
            <path d="m2 17 13-6 15 4-17 7z" fill="#dadddf" />
            <path d="m2 17 11 4v3L2 20z" fill="#303437" />
            <path d="m13 21 17-6v3l-17 6z" fill="#a8acaf" />
            <path d="m4 19 6 2" stroke="#777" />
          </Svg>
          <p className="whitespace-pre pt-[5px]">{'You can use Disk Cleanup to free up to 84.8 MB of disk\nspace on  (C:).'}</p>
        </div>
        <p className="leading-[15px]">Files to delete:</p>
        <div className="mt-[5px] flex h-[94px] shrink-0 overflow-hidden border border-[#828790] py-px pl-[5px] pr-px">
          <ul className="min-w-0 grow">
            {cleanup.map((c, i) => (
              <li key={c.name} className="flex h-[17px] items-center">
                <TickBox label={c.name} checked={c.checked} />
                <span className="ml-1"><Svg>{c.icon}</Svg></span>
                <span className={`flex h-[17px] grow items-center justify-between whitespace-nowrap pl-[2px] pr-[6px] leading-[17px] ${i === 0 ? 'bg-[#3399ff] text-white' : ''}`}>
                  <span>{c.name}</span>
                  <span>{c.size}</span>
                </span>
              </li>
            ))}
            <li className="flex h-[17px] items-center gap-1"><TickBox label="Thumbnails" /><Svg>{page}</Svg></li>
          </ul>
          <div className="ml-px flex h-[90px] w-4 flex-col items-center bg-[#f0f0f0]">
            <button aria-label="Scroll up" className="flex h-4 shrink-0 items-center"><Svg size={10} box={10}><path d="M1.500 6.500 5 3l3.500 3.500" stroke="#444" strokeWidth="1.600" /></Svg></button>
            <span className="h-[35px] w-full bg-[#cdcdcd]" />
            <span className="grow" />
            <button aria-label="Scroll down" className="flex h-4 shrink-0 items-center"><DownGlyph color="#444" width={1.6} /></button>
          </div>
        </div>
        <div className="mt-[7px] flex justify-between pr-2 leading-[15px]">
          <span>Total amount of disk space you gain:</span>
          <span>5.53 MB</span>
        </div>
        <fieldset className="mt-[5px] h-[151px] min-w-0 shrink-0 border border-[#dcdcdc] px-2">
          <legend className="-ml-[2px] px-[2px] leading-[13px]">Description</legend>
          <div className="flex h-[137px] flex-col justify-between pb-[10px] pt-[7px]">
            <p className="whitespace-pre leading-[13px]">
              {'Downloaded Program Files are ActiveX controls and Java applets\ndownloaded automatically from the Internet when you view certain\npages. They are temporarily stored in the Downloaded Program\nFiles folder on your hard disk.'}
            </p>
            <div className="flex justify-between pl-[2px] pr-[3px]">
              <button className="flex h-[22px] w-[136px] items-center justify-center border border-[#adadad] bg-[#e1e1e1]">
                <Svg>
                  <path d="M8 1Q5 3 1.500 3q0 3 .3 5H8z" fill="#1f6fc0" />
                  <path d="M8 1q3 2 6.500 2 0 3-.3 5H8z" fill="#f3b93c" />
                  <path d="M1.800 8H8v7Q2.800 12.500 1.800 8z" fill="#f3b93c" />
                  <path d="M8 8h6.200Q13.200 12.500 8 15z" fill="#1f6fc0" />
                  <path d="M8 1Q5 3 1.500 3q0 9 6.500 12 6.500-3 6.500-12Q11 3 8 1z" stroke="#3f4f60" strokeWidth=".9" />
                </Svg>
                Clean up system files
              </button>
              <button className="h-[22px] w-[88px] border border-[#adadad] bg-[#e1e1e1]">View Files</button>
            </div>
          </div>
        </fieldset>
        <a href="#help" className="mt-[6px] self-start leading-[15px] text-[#0f62c4] underline">How does Disk Cleanup work?</a>
      </div>
      <div className="mt-2 flex justify-end gap-2 pr-[7px]">
        <button className="h-[22px] w-[73px] border-2 border-[#0078d7] bg-[#e1e1e1]">OK</button>
        <button className="h-[22px] w-[73px] border border-[#adadad] bg-[#e1e1e1]">Cancel</button>
      </div>
    </section>
  );
}

/* ---------- taskbar ---------- */

function TaskButton({ label, tone = '', children }: { label: string; tone?: string; children: ReactNode }) {
  return (
    <button aria-label={label} className={`flex h-10 w-12 shrink-0 items-center justify-center ${tone}`}>
      {children}
    </button>
  );
}

function Taskbar() {
  return (
    <footer className="relative flex h-10 shrink-0 items-center overflow-hidden bg-[#02040a] text-white">
      <TaskButton label="Start">
        <Svg><path d="m0 2.300 6.500-.9v6.100H0zM7.500 1.200 16 0v7.500H7.500zM0 8.500h6.500v6.100L0 13.700zM7.500 8.500H16V16l-8.500-1.200z" fill="#fff" /></Svg>
      </TaskButton>
      <input
        type="search"
        aria-label="Search the web and Windows"
        placeholder="Search the web and Windows"
        className="h-10 w-[344px] bg-[#333333] pl-3 text-[14px] outline-none placeholder:text-[#a6a6a6]"
      />
      <div className="flex gap-px pl-px">
        <TaskButton label="Task View">
          <Svg size={20} box={20}><path d="M5.500 3.500h9v13h-9zM3.500 5H.5v10h3M16.500 5h3v10h-3" stroke="#fff" /></Svg>
        </TaskButton>
        <TaskButton label="Edge">
          <Svg size={22} box={22}>
            <path d="M1 10C1.500 4.500 5.500 1 11 1c6.500 0 10 4.500 10 10v2H7.500c.2 3 2.500 4.500 5.800 4.500 2.400 0 4.400-.7 6.200-1.800v4.100C17.500 21 15 21.500 12.500 21.500 7 21.500 3.700 18 3.700 13.500c0-3.500 2-6.300 4.800-7.600C5.500 6 3 7.300 1 10zm6.600-.8h8c0-2.500-1.200-4-3.800-4-2.400 0-3.800 1.600-4.200 4z" fill="#0d7bd8" />
          </Svg>
        </TaskButton>
        <TaskButton label="File Explorer">
          <Svg size={22} box={22}>
            <path d="M0 2h8l2 2h12v16H0z" fill="#f7cf64" />
            <path d="M1 5h20v3H1z" fill="#fff0b5" />
            <path d="M0 8h22v12H0z" fill="#fadf85" />
            <path d="M3 21v-8q0-2 2-2h12q2 0 2 2v8h-4v-5H7v5z" fill="#2fa9e8" />
          </Svg>
        </TaskButton>
        <TaskButton label="Store">
          <Svg size={24} box={24}>
            <path d="M7.500 7V5q0-4 4-4t4 4v1" stroke="#fff" strokeWidth="1.400" />
            <path d="M1.500 7.500 22 5.500v17L3 21z" fill="#fff" />
            <path d="m6.500 10.200 4.500-.4v4.100H6.500zM12 9.700l5.500-.5v4.700H12zM6.500 15H11v4.100l-4.500-.4zM12 15h5.500v4.700l-5.500-.5z" fill="#02040a" />
          </Svg>
        </TaskButton>
        <TaskButton label="Control Panel"><PanelIcon size={22} /></TaskButton>
        <TaskButton label="Disk Cleanup for (C:)" tone="bg-[#34383c] shadow-[inset_0_-2px_0_#76b9ed]">
          <Svg size={24} box={24}>
            <path d="m2 15 8-4 12 4v3l-8 4L2 18z" fill="#cfd3d5" />
            <path d="m2 15 12 4v3L2 18z" fill="#eef0f1" />
            <path d="m14 19 8-4v3l-8 4z" fill="#8b9094" />
            <path d="m3 5 4-2 12 4-1 6-5 3-6-3 1-4z" fill="#d5b066" />
            <path d="m3 5 4-2 12 4-4 2z" fill="#ead09a" />
            <path d="m10 9 1 4M13 10l1 5" stroke="#94742f" />
          </Svg>
        </TaskButton>
      </div>
      <span aria-hidden="true" className="absolute bottom-0 left-[593px] flex h-[2px] w-10 bg-[#76b9ed]">
        <span className="ml-[31px] w-2 bg-[#4d7ba0]" />
      </span>
      <div className="absolute right-[22px] top-0 flex text-[#5c5e61]">
        <Svg size={52} box={52}>
          <path d="m20-3 27 3q3 1 2 4v9L34 33q-2 3-5 3L5 30Q-1 27 3 20z" fill="#a2a3a5" />
          <path d="m5 20 26 7L48 8M5 26q-1 2 1 3l24 4" stroke="#02040a" strokeWidth="1.400" />
          <path d="m23 1 15 3-3 3-15-3z" fill="#02040a" />
        </Svg>
        <span className="ml-[10px] mt-[3px] w-[166px] whitespace-nowrap text-[18px] leading-[22px]">The Collection Book</span>
      </div>
      <div className="relative ml-auto flex h-full items-center">
        <button aria-label="Show hidden icons" className="flex w-6 justify-center"><Svg size={14} box={14}><path d="m1.500 9.500 5.500-5 5.500 5" stroke="#fff" strokeWidth="1.300" /></Svg></button>
        <button aria-label="Network" className="flex w-6 justify-center"><Svg size={18}><path d="M4.500 3.500h11v7h-11zM10 10.500v3M6.500 13.500h7M.500 2.500h3v3h-3zM2 6v7h2" stroke="#fff" /></Svg></button>
        <button aria-label="Volume" className="flex w-6 justify-center"><Svg size={18}><path d="M.500 5.500h2.500l3.500-3v11l-3.500-3H.5zM9 5.500q2 2.500 0 5M11 3.500q3.500 4.500 0 9M13 2q4.500 6 0 12" stroke="#fff" /></Svg></button>
        <button aria-label="Action Center" className="flex w-6 justify-center"><Svg size={18}><path d="M1 1.500h14v10h-4l-2.500 3v-3H1zM3.500 4.500h9M3.500 6.500h9M3.500 8.500h6" stroke="#fff" /></Svg></button>
        <time className="w-[70px] pb-[2px] text-center leading-[17px]">9:23 AM<br />8/30/2015</time>
        <button aria-label="Show desktop" className="h-full w-[5px] border-l border-[#5c5e62]" />
      </div>
    </footer>
  );
}

export default function App() {
  return (
    <div className="relative flex min-h-screen flex-col overflow-hidden bg-white font-['Noto_Sans',sans-serif] text-[11px] leading-4">
      <ControlPanel />
      <AdminTools />
      <DiskCleanup />
      <Taskbar />
      <svg width="14" height="21" viewBox="0 0 14 21" aria-hidden="true" className="pointer-events-none absolute left-[471px] top-[584px]">
        <path d="M.7 1v15.500l3.500-3.300L6.700 19l2.500-1.100-2.500-5.500h4.800z" fill="#fff" stroke="#111" strokeWidth="1" />
      </svg>
    </div>
  );
}
